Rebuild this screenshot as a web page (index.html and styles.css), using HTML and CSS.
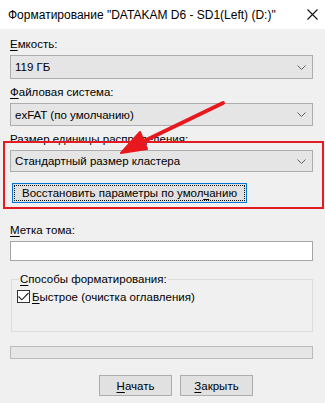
FILE: index.html
```html
<!DOCTYPE html>
<html lang="ru">

<head>
	<meta charset="utf-8">
	<title>Форматирование</title>
	<link rel="stylesheet" href="styles.css">
</head>

<body>
	<div class="dialog">
		<header class="titlebar">
			<span class="title">Форматирование "DATAKAM D6 - SD1(Left) (D:)"</span>
			<svg class="close" width="11" height="11" viewBox="0 0 11 11">
				<path d="M0.5 0.5 L10.5 10.5 M10.5 0.5 L0.5 10.5" stroke="#111" stroke-width="1.1" fill="none"/>
			</svg>
		</header>

		<main class="content">
			<label class="label"><u>Е</u>мкость:</label>
			<div class="combo combo-tall">
				<span>119 ГБ</span>
				<svg class="chev" width="9" height="5" viewBox="0 0 9 5"><path d="M0.5 0.5 L4.5 4.5 L8.5 0.5" stroke="#606060" fill="none"/></svg>
			</div>

			<label class="label"><u>Ф</u>айловая система:</label>
			<div class="combo">
				<span>exFAT (по умолчанию)</span>
				<svg class="chev" width="9" height="5" viewBox="0 0 9 5"><path d="M0.5 0.5 L4.5 4.5 L8.5 0.5" stroke="#606060" fill="none"/></svg>
			</div>

			<label class="label">Размер единицы распределения:</label>
			<div class="combo combo-short">
				<span>Стандартный размер кластера</span>
				<svg class="chev" width="9" height="5" viewBox="0 0 9 5"><path d="M0.5 0.5 L4.5 4.5 L8.5 0.5" stroke="#606060" fill="none"/></svg>
			</div>

			<div class="restore-row">
				<button type="button" class="btn btn-focus"><span>Восстановить параметры по умол<u>ч</u>анию</span></button>
			</div>

			<label class="label label-gap"><u>М</u>етка тома:</label>
			<div class="textbox"></div>

			<fieldset class="group">
				<legend><u>С</u>пособы форматирования:</legend>
				<div class="check-row">
					<span class="checkbox">
						<svg width="11" height="9" viewBox="0 0 11 9"><path d="M0.5 4.5 L3.8 7.8 L10.5 1" stroke="#222" stroke-width="1.1" fill="none"/></svg>
					</span>
					<span><u>Б</u>ыстрое (очистка оглавления)</span>
				</div>
			</fieldset>

			<div class="progress"></div>

			<div class="actions">
				<button type="button" class="btn btn-action"><u>Н</u>ачать</button>
				<button type="button" class="btn btn-action"><u>З</u>акрыть</button>
			</div>
		</main>

		<!-- annotation on top of the screenshot -->
		<div class="highlight"></div>
		<svg class="arrow" width="325" height="403" viewBox="0 0 325 403">
			<path d="M223 103 L138 144" stroke="#e8191e" stroke-width="4" stroke-linecap="round" fill="none"/>
			<path d="M121 153 L140 132 L147 149 Z" fill="#e8191e" stroke="#e8191e" stroke-width="2" stroke-linejoin="round"/>
		</svg>
	</div>
</body>

</html>
```

FILE: styles.css
```css
*,
*::before,
*::after {
	box-sizing: border-box;
}

body {
	margin: 0;
	width: 325px;
	height: 403px;
	overflow: hidden;
	font-family: "Liberation Sans", Arial, sans-serif;
	font-size: 11.5px;
	color: #000;
	background: #f0f0f0;
}

u {
	text-decoration-thickness: 1px;
	text-underline-offset: 2px;
}

.dialog {
	position: relative;
	height: 403px;
}

.titlebar {
	display: flex;
	align-items: center;
	justify-content: space-between;
	height: 29px;
	padding: 0 7px 0 8px;
	background: #fff;

	.title {
		font-size: 12px;
		white-space: nowrap;
	}
}

.content {
	display: flex;
	flex-direction: column;
	padding: 8px 12px 0 10px;
}

.label {
	display: block;
	height: 18px;
	line-height: 15px;
}

.combo {
	display: flex;
	align-items: center;
	justify-content: space-between;
	height: 23px;
	margin-bottom: 6px;
	padding: 0 6px 0 4px;
	border: 1px solid #adadad;
	background: #e5e5e5;
}

.combo-tall {
	height: 24px;
	margin-bottom: 6px;
}

.combo-short {
	height: 22px;
	margin-bottom: 11px;
}

.btn {
	font: inherit;
	color: #000;
	background: #e1e1e1;
	border: 1px solid #adadad;
	padding: 0;
	cursor: pointer;
}

.restore-row {
	display: flex;
	padding-left: 2px;
}

.btn-focus {
	width: 235px;
	height: 20px;
	border: 1px solid #0078d7;
	padding: 1px;

	span {
		display: block;
		height: 100%;
		border: 1px dotted #111;
		line-height: 15px;
		text-align: center;
	}
}

.label-gap {
	margin-top: 20px;
}

.textbox {
	height: 20px;
	border: 1px solid #a5a5a5;
	background: #fff;
}

.group {
	margin: 11px 0 0 1px;
	padding: 4px 5px 0 5px;
	height: 60px;
	border: 1px solid #dcdcdc;

	legend {
		padding: 0 1px;
		margin-left: 2px;
		line-height: 14px;
	}
}

.check-row {
	display: flex;
	align-items: center;
	gap: 2px;
}

.checkbox {
	display: flex;
	align-items: center;
	justify-content: center;
	width: 13px;
	height: 13px;
	border: 1px solid #333;
	background: #fff;
}

.progress {
	height: 13px;
	margin-top: 14px;
	border: 1px solid #bcbcbc;
	background: #e6e6e6;
}

.actions {
	display: flex;
	gap: 8px;
	margin-top: 16px;
	padding-left: 89px;
}

.btn-action {
	width: 73px;
	height: 21px;
}

.highlight {
	position: absolute;
	left: 3px;
	top: 141px;
	width: 321px;
	height: 68px;
	border: 2px solid #e31b23;
}

.arrow {
	position: absolute;
	left: 0;
	top: 0;
	pointer-events: none;
}
```
